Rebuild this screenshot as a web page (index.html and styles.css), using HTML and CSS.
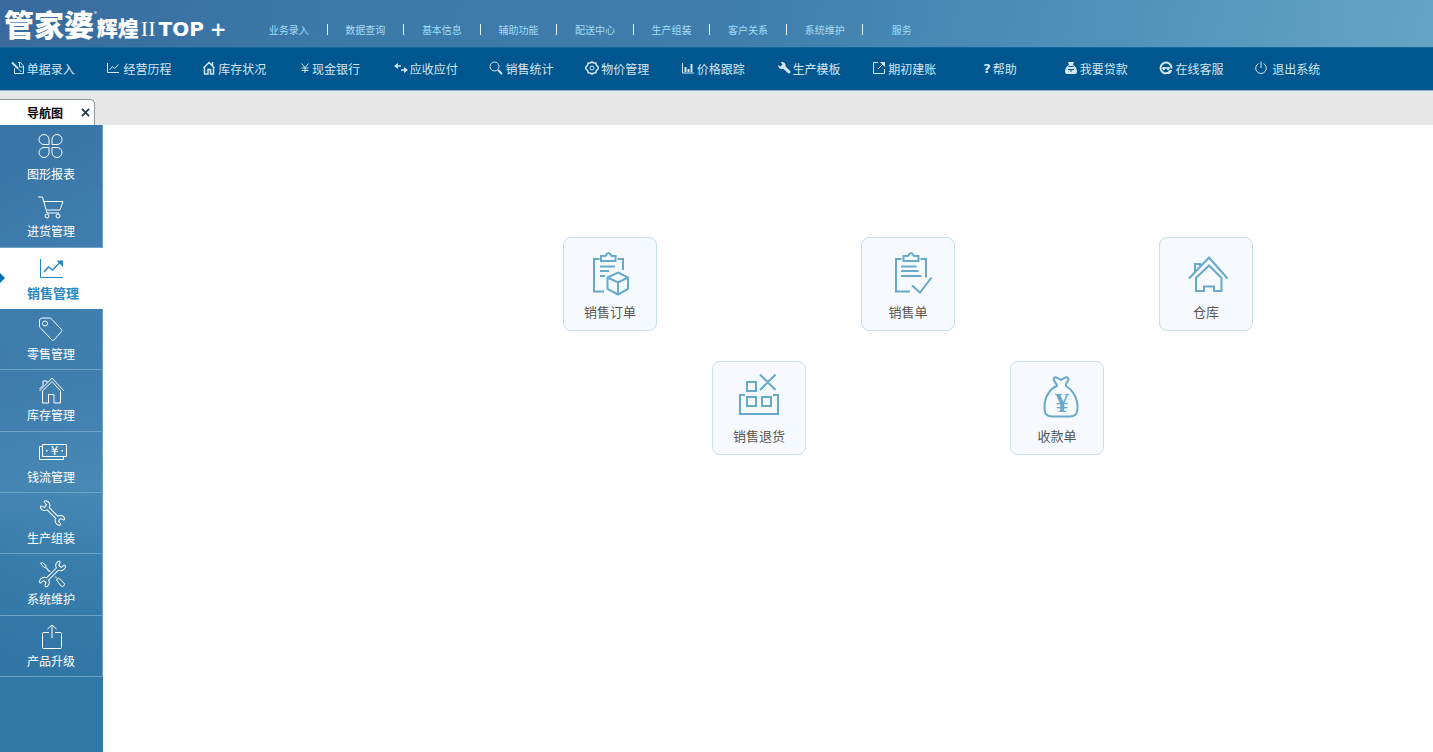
FILE: index.html
```html
<!DOCTYPE html>
<html lang="zh-CN">
<head>
  <meta charset="UTF-8">
  <title>管家婆辉煌II TOP+</title>
  <link rel="stylesheet" href="styles.css">
</head>
<body>
  <header class="header">
    <div class="logo">
      <span class="logo-main">管家婆</span><span class="logo-reg">®</span><span class="logo-sub">辉煌</span><span class="logo-num">II</span><span class="logo-top">TOP</span><span class="logo-top">+</span>
    </div>
    <nav class="menu">
      <a href="#">业务录入</a>
      <a href="#">数据查询</a>
      <a href="#">基本信息</a>
      <a href="#">辅助功能</a>
      <a href="#">配送中心</a>
      <a href="#">生产组装</a>
      <a href="#">客户关系</a>
      <a href="#">系统维护</a>
      <a href="#">服务</a>
    </nav>
  </header>

  <div class="toolbar">
    <div class="tools">
      <button><svg viewBox="0 0 14 14"><path d="M3.500 7v5.500h9V5L9.500 1.500H7M8.500 2v4h4M7 7.500l3.500 3.500"/><path d="M1 1.500l6 6" stroke-width="2"/></svg>单据录入</button>
      <button class="wide"><svg viewBox="0 0 14 14"><path d="M1.500 2v9.500H13M3.500 9l3-3.500 2 2 4-4"/></svg>经营历程</button>
      <button><svg viewBox="0 0 14 14"><path d="M1.500 7L7 1.500 12.500 7M2.500 6.500v6.500H6V8.500h2.500V13h3V6.500M10.500 1v4" stroke-width="1.500"/></svg>库存状况</button>
      <button><svg class="narrow" viewBox="0 0 10 14"><path d="M1.500 2.500l3.500 4 3.500-4M5 6.500V12M1.500 7h7M1.500 9.500h7"/></svg>现金银行</button>
      <button><svg viewBox="0 0 14 14"><path d="M2 5h5M7 9h5" stroke-width="1.500"/><path class="solid" d="M0 5l4-3v6zM14 9l-4-3v6z"/></svg>应收应付</button>
      <button><svg viewBox="0 0 14 14"><circle cx="5.500" cy="5.500" r="4.500"/><path d="M9 9l4 4" stroke-width="2"/></svg>销售统计</button>
      <button><svg viewBox="0 0 14 14"><path d="M5.500 2L7 .8 8.500 2l2.400.1.500 2L13.200 6v2l-1.800 1.500-.5 2.200-2.400.3L7 13.200 5.500 12l-2.400-.3-.5-2.200L.8 8V6l1.800-1.700.5-2.200z" stroke-width="1.500"/><circle cx="7" cy="7" r="2"/></svg>物价管理</button>
      <button><svg viewBox="0 0 14 14"><path d="M1.500 2v10H13"/><path d="M4.500 6v5M7.500 8v3M10.500 3v8" stroke-width="2"/></svg>价格跟踪</button>
      <button><svg viewBox="0 0 14 14"><path class="solid" d="M5 1c2.500 0 4 2 3.500 4.200l4.800 5c.8 1-.8 3-2 2L6.200 7.700C4 8.500 1 7 1 4l2.500 1.500 2-2L3.700 1.200z"/></svg>生产模板</button>
      <button><svg viewBox="0 0 14 14"><path d="M6 1.500H1.500v11h11V8M6 8l6-6"/><path class="solid" d="M8 1h5v5z"/></svg>期初建账</button>
      <button><b class="question">?</b>帮助</button>
      <button><svg viewBox="0 0 14 14"><path class="solid" fill-rule="evenodd" d="M4 1h6L9 4c3 1.500 4 4 4 6.500 0 2-1 2.500-2.500 2.500h-7C2 13 1 12.500 1 10.500 1 8 2 5.500 5 4zM4.500 5v1h5V5zM4 8v1h2.500v2h1V9H10V8z"/></svg>我要贷款</button>
      <button><svg viewBox="0 0 14 14"><path d="M12.500 7.500A5.500 5.500 0 1 0 7 12.500" stroke-width="2"/><path d="M3 7h8" stroke-width="1.500"/><path class="solid" d="M4 6h2v3H4zM8 6h2v3H8zM10 9h3c0 2-1.500 3.500-3 4H7v-2h2z"/></svg>在线客服</button>
      <button class="wide"><svg viewBox="0 0 14 14"><path d="M4.500 2.500a5.300 5.300 0 1 0 5 0M7 .5V7"/></svg>退出系统</button>
    </div>
  </div>

  <div class="tabs">
    <div class="tab">导航图<button class="tab-close" aria-label="关闭"><svg viewBox="0 0 10 10"><path d="M1 1l8 8M9 1L1 9"/></svg></button></div>
  </div>

  <div class="content">
    <aside class="sidebar">
      <nav class="side-menu">
        <a href="#" class="first">
          <svg viewBox="0 0 32 32"><path d="M13 15.500V10.500a5 5 0 1 0-5 5zM16 15.500V10.500a5 5 0 1 1 5 5zM13 18.500H8a5 5 0 1 0 5 5zM16 18.500h5a5 5 0 1 1-5 5z"/></svg>
          图形报表</a>
        <a href="#">
          <svg viewBox="0 0 32 32"><path d="M2 7h4.500L11 23h12M7.500 11.500H27L24 20H10"/><circle cx="11" cy="26" r="2"/><circle cx="22" cy="26" r="2"/></svg>
          进货管理</a>
        <a href="#" class="active">
          <svg viewBox="0 0 32 32"><path d="M4.500 7v18.500H27"/><path d="M8 20l4.500-5 4 3L24 10.500" stroke-width="1.500"/><path d="M20.500 8.500H27V15z" fill="currentColor" stroke="none"/></svg>
          销售管理</a>
        <a href="#">
          <svg viewBox="0 0 32 32"><path d="M3.500 8c0-2 1-3 3-3H13c1.500 0 2 .5 3 1.500l9.500 10c.7.700.7 1.300 0 2L18 27c-.7.700-1.300.7-2 0L5 15.500C4 14.500 3.500 14 3.500 13z"/><circle cx="9" cy="10.500" r="2.500"/></svg>
          零售管理</a>
        <a href="#">
          <svg viewBox="0 0 32 32"><path d="M3.500 17L16 4l12 13M3.500 15L7 11.500V7h4v1.500M6.500 17v12h6V20.500H18V29h6.500V17L16 7.500z"/></svg>
          库存管理</a>
        <a href="#">
          <svg viewBox="0 0 32 32"><path d="M6.500 8.500h24v12h-24zM6.500 10.500h-3v13h24v-3"/><path d="M10 14h1.500v1.500H10zM25.500 14H27v1.500h-1.500z" fill="currentColor" stroke="none"/><text x="18.500" y="19" class="yen-side">¥</text></svg>
          钱流管理</a>
        <a href="#">
          <svg viewBox="0 0 32 32"><g transform="translate(16.500 16) rotate(45)"><path d="M-6-1.500H6C6.500-4 9-5.500 11.500-5c1.500.3 2 1.500 1 2.200L9.500-1.500l.5 3 3.500.5c1 .3.500 2-1 2.500C10 5.500 7 4.500 6 1.500H-6C-6.500 4-9 5.500-11.500 5c-1.500-.3-2-1.500-1-2.200l3-1.300-.5-3-3.500-.5c-1-.3-.5-2 1-2.500C-10-5.500-7-4.500-6-1.500z"/></g></svg>
          生产组装</a>
        <a href="#">
          <svg viewBox="0 0 32 32"><g transform="translate(16.500 16) rotate(-45)"><path d="M-7-1.500H7C7.500-4 10-5.500 12.500-5c1.500.3 2 1.500 1 2.200l-3 1.300.5 3 3.500.5c1 .3.500 2-1 2.500C11 5.500 8 4.500 7 1.500H-7C-7.500 4-10 5.500-12.500 5c-1.500-.3-2-1.500-1-2.200l3-1.300-.5-3-3.500-.5c-1-.3-.5-2 1-2.500C-11-5.500-8-4.500-7-1.500z"/></g><path d="M4.500 5.500l2-1 3.500 3v2L14 13.500M4.500 5.500L8 9.500h1.500L13.500 14M19 18.500l2 2M20.500 22l2-2 5.500 5c1.500 2-1 4.500-3 3z"/></svg>
          系统维护</a>
        <a href="#">
          <svg viewBox="0 0 32 32"><path d="M13 12.500H7.500c-.7 0-1 .3-1 1v14c0 .7.300 1 1 1h17c.7 0 1-.3 1-1v-14c0-.7-.3-1-1-1H19M16 18V5M11.500 9L16 5l4.500 4"/></svg>
          产品升级</a>
      </nav>
    </aside>

    <main class="main">
      <div class="flow">
        <button class="card order">
          <svg viewBox="0 0 48 48"><path d="M13.500 12H8v32.500H18M31.500 12H37V23M15 9h4.500c.5 0 1-3 3-3s2.500 3 3 3h4v5H15zM14 19.500h15M14 24h9M14 29h5"/><path d="M32 25.500l10 5V42l-10 5.500L21.500 42V30.500zM21.500 30.500l10.500 5 10-5M32 35.500v12"/></svg>
          销售订单</button>
        <button class="card sale">
          <svg viewBox="0 0 48 48"><path d="M17.500 12H12v32.500h14M36.500 12H42v18.500M19.500 9H24c.5 0 1-3 3-3s2.500 3 3 3h4.500v5h-15zM17 19.500h15.500M17 24h17.500M17 29h20.500"/><path d="M28 38.500l8 7L47.500 30.500"/></svg>
          销售单</button>
        <button class="card store">
          <svg viewBox="0 0 48 48"><path d="M7 31.500l20-21 18.500 21M13 25v-8h5v2M14 31v13h8v-4.500h10V44h7.500V31L27 18.500z"/></svg>
          仓库</button>
        <button class="card refund">
          <svg viewBox="0 0 48 48"><path d="M10 24H5v19h38V24h-5M12 11h9v9h-9zM12 26h9v9h-9zM27 26h9v9h-9zM25 3.500L40.500 19M40.500 3.500L25 19"/></svg>
          销售退货</button>
        <button class="card receipt">
          <svg viewBox="0 0 48 48"><path d="M24 15c0-3-3.500-4-3.500-7 1-3 4-1.500 7.500 1 3-2.500 6.500-4 7.500-1 0 3-3.500 4-2.500 7 5 3 11.500 10 11.500 21 0 7-2 9.500-8 9.500H19.500c-6 0-8-2.500-8-9.500C11.500 25 18 17 24 15z"/><text x="29" y="41" class="yen-card">¥</text></svg>
          收款单</button>
      </div>
    </main>
  </div>
</body>
</html>
```
FILE: styles.css
```css
* {
  box-sizing: border-box;
}
body {
  margin: 0;
  min-height: 100vh;
  display: flex;
  flex-direction: column;
  font-family: "Noto Sans CJK SC", sans-serif;
  font-size: 12px;
  background-color: #fff;
}
a {
  color: inherit;
  text-decoration: none;
}
button {
  font: inherit;
  color: inherit;
  background: none;
  border: none;
  padding: 0;
  cursor: pointer;
}
svg {
  fill: none;
  stroke: currentColor;
  overflow: visible;
  flex-shrink: 0;
}

/* header */
.header {
  height: 47px;
  display: flex;
  background: linear-gradient(100deg, #396a9e 0%, #3b79a8 22%, #3e7dac 50%, #4f90b9 75%, #64a4c6 100%);
}
.logo {
  width: 247px;
  padding-left: 4px;
  display: flex;
  align-items: center;
  color: #fff;
  line-height: 47px;
  white-space: nowrap;
}
.logo-main {
  font-size: 30px;
  font-weight: 900;
}
.logo-reg {
  font-size: 6px;
  line-height: 28px;
  align-self: flex-start;
}
.logo-sub {
  font-size: 21px;
  font-weight: 900;
  padding-top: 7px;
}
.logo-num {
  font-family: "Liberation Serif", serif;
  font-size: 22px;
  padding: 10px 3px 0 2px;
}
.logo-top {
  font-family: "DejaVu Sans", sans-serif;
  font-size: 20px;
  font-weight: bold;
  padding: 12px 6px 0 0;
}
.menu {
  width: 689px;
  margin-left: 4px;
  padding-top: 24px;
  display: grid;
  grid-template-columns: repeat(9, 1fr);
  align-items: start;
}
.menu a {
  font-size: 10px;
  line-height: 11px;
  text-align: center;
  color: #a4dcf6;
  border-right: 1px solid #e4eef5;
}
.menu a:last-child {
  border-right: none;
}

/* toolbar */
.toolbar {
  height: 44px;
  background-color: #00568e;
  border-top: 1px solid #17669a;
  border-bottom: 1px solid #8fb2cc;
}
.tools {
  max-width: 1340px;
  height: 100%;
  display: grid;
  grid-template-columns: repeat(14, 1fr);
}
.tools button {
  display: flex;
  align-items: center;
  justify-content: center;
  gap: 2px;
  padding: 0 10px 2px 0;
  color: #d3e5f0;
  white-space: nowrap;
}
.tools .wide {
  gap: 4px;
}
.tools svg {
  width: 14px;
  height: 14px;
}
.tools svg.narrow {
  width: 10px;
}
.tools .solid {
  fill: currentColor;
  stroke: none;
}
.question {
  font-family: "DejaVu Sans", sans-serif;
  font-size: 13px;
}

/* tabs */
.tabs {
  height: 34px;
  padding-top: 8px;
  background-color: #e7e7e7;
}
.tab {
  width: 95px;
  height: 26px;
  padding: 0 4px 0 27px;
  display: flex;
  align-items: center;
  justify-content: space-between;
  background-color: #fff;
  border: 1px solid #8f9aa0;
  border-left: none;
  border-bottom: none;
  border-radius: 0 5px 0 0;
  font-weight: bold;
  color: #000;
}
.tab-close {
  display: flex;
  color: #22384a;
}
.tab-close svg {
  width: 9px;
  height: 9px;
  stroke-width: 2;
}

/* sidebar */
.content {
  flex: 1;
  display: flex;
}
.sidebar {
  width: 103px;
  background-color: #3078a5;
}
.side-menu {
  height: 552px;
  display: grid;
  grid-template-rows: repeat(9, 1fr);
  background: linear-gradient(120deg, rgba(30, 80, 150, 0.25), rgba(255, 255, 255, 0)), linear-gradient(#4080ad 0%, #4588b3 25%, #4384b0 45%, #4b8db7 65%, #3a80ac 80%, #3076a5 100%);
}
.side-menu a {
  position: relative;
  display: flex;
  flex-direction: column;
  padding: 4px 0 0 27px;
  line-height: 18px;
  color: #fff;
  border-right: 1px solid #6ba2c5;
  border-bottom: 1px solid #6ba2c5;
}
.side-menu .first {
  border-bottom-color: transparent;
}
.side-menu .first svg {
  margin-bottom: 4px;
}
.side-menu svg {
  width: 32px;
  height: 32px;
  margin-left: 9px;
}
.side-menu .active {
  background-color: #fff;
  border-color: #fff;
  color: #2587c4;
  font-size: 13px;
  font-weight: bold;
}
.side-menu .active::before {
  content: "";
  position: absolute;
  left: 0;
  top: 25px;
  border: 5px solid transparent;
  border-left-color: #0070b0;
  border-right: none;
}
.yen-side {
  font-family: "DejaVu Sans", sans-serif;
  font-size: 12px;
  text-anchor: middle;
  fill: currentColor;
  stroke: none;
}

/* flow chart */
.main {
  flex: 1;
  padding: 112px 180px 40px 0;
}
.flow {
  display: grid;
  grid-template-columns: repeat(5, 94px);
  gap: 30px 55px;
  justify-content: end;
}
.card {
  height: 94px;
  padding-top: 9px;
  display: flex;
  flex-direction: column;
  align-items: center;
  gap: 7px;
  background-color: #f6faff;
  border: 1px solid #c5e2ea;
  border-radius: 8px;
  font-size: 13px;
  line-height: 20px;
  color: #595450;
}
.card svg {
  width: 48px;
  height: 48px;
  color: #66a9ca;
  stroke-width: 2;
}
.order {
  grid-area: 1 / 1;
}
.sale {
  grid-area: 1 / 3;
}
.store {
  grid-area: 1 / 5;
}
.refund {
  grid-area: 2 / 2;
}
.receipt {
  grid-area: 2 / 4;
}
.yen-card {
  font-family: "Liberation Serif", serif;
  font-size: 28px;
  font-weight: bold;
  text-anchor: middle;
  fill: currentColor;
  stroke: none;
}
```
